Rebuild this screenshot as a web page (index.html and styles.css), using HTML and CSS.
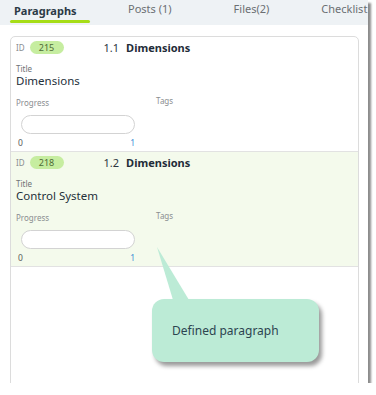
FILE: index.html
```html
<!DOCTYPE html>
<html>
<head>
  <title>Paragraphs</title>
  <link rel="stylesheet" href="styles.css">
</head>
<body>
  <div class="frame">
    <nav class="tabs">
      <a class="tab active">Paragraphs</a>
      <a class="tab posts">Posts (1)</a>
      <a class="tab files">Files(2)</a>
      <a class="tab checklist">Checklist</a>
    </nav>
    <div class="list">
      <div class="row">
        <div class="head">
          <span class="label">ID</span>
          <span class="pill">215</span>
          <span class="num">1.1</span>
          <span class="name">Dimensions</span>
        </div>
        <div class="label title-label">Title</div>
        <div class="value">Dimensions</div>
        <div class="meta">
          <span class="label">Progress</span>
          <span class="label tags">Tags</span>
        </div>
        <div class="bar"></div>
        <div class="range"><span>0</span><span class="max">1</span></div>
      </div>
      <div class="row selected">
        <div class="head">
          <span class="label">ID</span>
          <span class="pill">218</span>
          <span class="num">1.2</span>
          <span class="name">Dimensions</span>
        </div>
        <div class="label title-label">Title</div>
        <div class="value">Control System</div>
        <div class="meta">
          <span class="label">Progress</span>
          <span class="label tags">Tags</span>
        </div>
        <div class="bar"></div>
        <div class="range"><span>0</span><span class="max">1</span></div>
      </div>
    </div>
    <div class="callout">
      <svg class="pointer" width="40" height="56" viewBox="0 0 40 56">
        <polygon points="5,0 21,53 37,53" fill="#bcebd6"/>
      </svg>
      Defined paragraph
    </div>
  </div>
</body>
</html>
```

FILE: styles.css
```css
body {
  margin: 0;
  padding: 0;
  background-color: #ffffff;
  font-family: "Noto Sans", "Open Sans", sans-serif;
}

.frame {
  position: relative;
  width: 368px;
  height: 383px;
  overflow: hidden;
  background-color: #ffffff;
  box-shadow: 3px 3px 2px rgba(0, 0, 0, 0.45);
}

.tabs {
  display: flex;
  height: 25px;
  background-color: #eef2f5;
  white-space: nowrap;
}

.tab {
  position: relative;
  font-size: 11px;
  line-height: 18px;
  color: #6b6f73;
}

.tab.active {
  width: 76px;
  margin-left: 10px;
  padding-left: 4px;
  font-weight: bold;
  color: #2b3a46;
  line-height: 22px;
}

.tab.active::after {
  content: "";
  position: absolute;
  left: 0;
  right: 0;
  top: 20px;
  height: 3px;
  border-radius: 2px;
  background-color: #a6dd17;
}

.tab.posts {
  margin-left: 38px;
}

.tab.files {
  margin-left: 62px;
}

.tab.checklist {
  margin-left: 52px;
}

.list {
  margin: 11px 9px 0 10px;
  height: 400px;
  border: 1px solid #dcdcdc;
  border-radius: 5px;
}

.row {
  padding: 4px 5px 3px 5px;
  border-bottom: 1px solid #e2e2e2;
}

.row.selected {
  background-color: #f4faec;
}

.head {
  display: flex;
  align-items: center;
  height: 13px;
}

.label {
  font-size: 8px;
  line-height: 10px;
  color: #8a8d90;
}

.pill {
  width: 34px;
  height: 13px;
  margin-left: 5px;
  border-radius: 7px;
  background-color: #c6eda0;
  color: #4f6b35;
  font-size: 9px;
  line-height: 13px;
  text-align: center;
}

.num {
  margin-left: 40px;
  font-size: 11px;
  color: #2b3540;
}

.name {
  margin-left: 7px;
  font-size: 11px;
  font-weight: bold;
  color: #1f2c38;
}

.title-label {
  margin-top: 10px;
  color: #6f7275;
}

.value {
  font-size: 11.5px;
  line-height: 13px;
  color: #24303a;
}

.meta {
  display: flex;
  margin-top: 11px;
}

.tags {
  margin-left: 107px;
  margin-top: -2px;
}

.bar {
  width: 112px;
  height: 17px;
  margin: 7px 0 0 5px;
  border: 1px solid #d3d3d3;
  border-radius: 10px;
  background-color: #ffffff;
}

.range {
  display: flex;
  width: 117px;
  margin: 4px 0 0 2px;
  font-size: 8.5px;
  line-height: 10px;
  color: #5a5a5a;
}

.range .max {
  margin-left: auto;
  color: #3d8fd6;
}

.callout {
  position: absolute;
  left: 152px;
  top: 299px;
  width: 167px;
  height: 63px;
  border-radius: 12px;
  background-color: #bcebd6;
  box-shadow: 3px 4px 4px rgba(0, 0, 0, 0.4);
  font-size: 12px;
  line-height: 63px;
  color: #2c4450;
  text-indent: 20px;
}

.pointer {
  position: absolute;
  left: 0;
  top: -52px;
}
```
